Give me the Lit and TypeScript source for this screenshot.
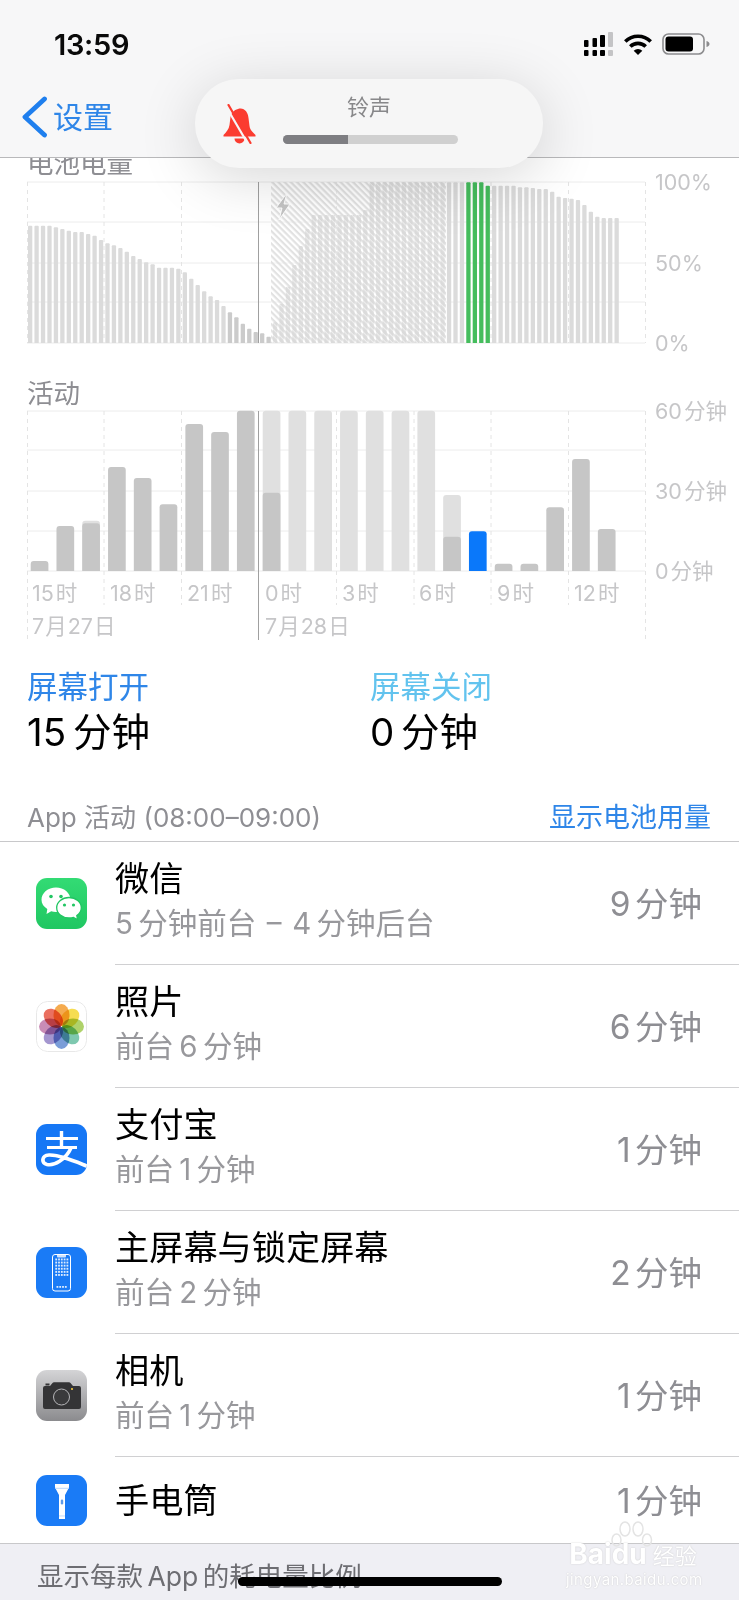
import { LitElement, html, css, svg } from "lit";
import { customElement } from "lit/decorators.js";

const batteryTops = [197,197,197,197,202,207,212,216,216,222,227,240,250,256,264,275,288,297,307,313,323,323,323,326,337,356,375,394,409,420,438,457,472,491,506,516,520,530,487,432,380,315,258,207,165,165,165,165,165,165,165,165,150,
  67,67,67,67,67,67,67,67,67,67,67,67,67,67,67,67,67,67,77,
  77,77,77,77,82,82,84,87,87,95,110,114,116,120,135,155,170,174,174,174];
const HOUR_X = [27.5, 104, 181.5, 258.5, 336.5, 414, 491, 568.5, 645.5];

const activity: { d?: number; l?: number; b?: number }[] = [
  { d: 573 }, { d: 468 }, { d: 460, l: 452 }, { d: 291 }, { d: 324 }, { d: 403 }, { d: 162 }, { d: 186 }, { d: 122 },
  { d: 368, l: 122 }, { l: 122 }, { l: 122 }, { l: 122 }, { l: 122 }, { l: 122 }, { l: 122 },
  { d: 500, l: 375 }, { b: 484 }, { d: 581 }, { d: 581 }, { d: 412 }, { d: 267 }, { d: 477 },
];

const hourLabels = [
  ["15 时", 32], ["18 时", 110], ["21 时", 187], ["0 时", 265], ["3 时", 342], ["6 时", 419], ["9 时", 497], ["12 时", 574],
] as [string, number][];

const icons: Record<string, () => unknown> = {
  wechat: () => html`<svg viewBox="0 0 51 51" width="51" height="51">
    <defs><linearGradient id="wg" x1="0" y1="0" x2="0" y2="1"><stop offset="0" stop-color="#33db74"/><stop offset="1" stop-color="#20c762"/></linearGradient></defs>
    <rect width="51" height="51" fill="url(#wg)"/>
    <path d="M20 9.500c8 0 14.500 5.500 14.500 12.300S28 34 20 34c-1.700 0-3.300-.2-4.800-.7L10.500 36l.8-5c-3.700-2.300-5.800-5.500-5.800-9.200C5.500 15 12 9.500 20 9.500Z" fill="#fff"/>
    <path d="M33 19.500c6.900 0 12.300 4.500 12.300 10.200 0 3.200-1.700 6-4.500 7.900l.8 4.300-4.100-2.500c-1.400.4-2.900.6-4.500.6-6.900 0-12.300-4.500-12.300-10.300S26.100 19.500 33 19.500Z" fill="#fff" stroke="#22c663" stroke-width="1.300"/>
    <circle cx="15" cy="18.500" r="1.800" fill="#22c663"/><circle cx="25" cy="18.500" r="1.800" fill="#22c663"/>
    <circle cx="28.500" cy="27" r="1.600" fill="#22c663"/><circle cx="37.500" cy="27" r="1.600" fill="#22c663"/>
  </svg>`,
  photos: () => {
    const colors = ["#f4a23c", "#f5d93f", "#a6cd5a", "#70c2a6", "#6c92d4", "#9a8bca", "#c380ae", "#e8604f"];
    return html`<svg viewBox="0 0 51 51" width="51" height="51">
      <rect x=".5" y=".5" width="50" height="50" rx="11" fill="#fff" stroke="#e8e8e8"/>
      ${colors.map((c, i) => svg`<ellipse cx="25.500" cy="14" rx="8" ry="11" fill=${c} fill-opacity=".9" transform="rotate(${i * 45} 25.5 25.5)" style="mix-blend-mode:multiply"/>`)}
    </svg>`;
  },
  alipay: () => html`<svg viewBox="0 0 51 51" width="51" height="51">
    <rect width="51" height="51" fill="#1677f5"/>
    <g fill="none" stroke="#fff" stroke-linecap="butt">
      <path d="M10 14.500h32M11 23.500h30" stroke-width="3.200" />
      <path d="M25.500 7v16" stroke-width="3.400"/>
      <path d="M35 24C29.500 36 18 42 11 40.500 5 39 5.500 31.500 13 31 23 30.500 38 37 52 42.500" stroke-width="3.600"/>
    </g>
  </svg>`,
  home: () => {
    const dots: unknown[] = [];
    for (let r = 0; r < 6; r++)
      for (let c = 0; c < 5; c++)
        dots.push(svg`<rect x=${19.3 + c * 2.8} y=${11.5 + r * 3.1} width="1.800" height="1.900" fill="#fff" fill-opacity=".85"/>`);
    for (let c = 0; c < 4; c++)
      dots.push(svg`<rect x=${20.5 + c * 2.8} y="39" width="1.800" height="1.800" fill="#fff" fill-opacity=".85"/>`);
    return html`<svg viewBox="0 0 51 51" width="51" height="51">
      <rect width="51" height="51" fill="#1a7bf6"/>
      <rect x="16.500" y="7.500" width="18" height="36.500" rx="2.500" fill="none" stroke="#fff" stroke-width="1"/>
      <path d="M21 8h9v1.500a1 1 0 0 1-1 1h-7a1 1 0 0 1-1-1Z" fill="#fff" fill-opacity=".8"/>
      ${dots}
    </svg>`;
  },
  camera: () => html`<svg viewBox="0 0 51 51" width="51" height="51">
    <defs><linearGradient id="cg" x1="0" y1="0" x2="0" y2="1"><stop offset="0" stop-color="#d4d4d6"/><stop offset="1" stop-color="#8b8b8e"/></linearGradient></defs>
    <rect width="51" height="51" fill="url(#cg)"/>
    <path d="M9 16h5l2.500-3a2 2 0 0 1 1.500-.7h15a2 2 0 0 1 1.500.7l2.500 3h6a2 2 0 0 1 2 2v19a2 2 0 0 1-2 2H9a2 2 0 0 1-2-2V18a2 2 0 0 1 2-2Z" fill="#343436"/>
    <rect x="9.500" y="13.500" width="4" height="2" fill="#343436"/>
    <circle cx="25.500" cy="27" r="8" fill="#3a3a3c" stroke="#b5b5b8" stroke-width="1"/>
    <circle cx="36" cy="19" r="1.100" fill="#f0c93e"/>
  </svg>`,
  flash: () => html`<svg viewBox="0 0 51 51" width="51" height="51">
    <rect width="51" height="51" fill="#1a7bf6"/>
    <path d="M19 9h14v3.500l-4 7.500v24h-6V20l-4-7.500Z" fill="#fff"/>
    <rect x="19" y="12.800" width="14" height="1" fill="#bcd8fb"/>
    <rect x="23" y="40.500" width="6" height=".9" fill="#bcd8fb"/>
    <rect x="24.800" y="24.500" width="2.400" height="5" rx="1.200" fill="#5d9ae8"/>
  </svg>`,
};

const rows = [
  { icon: "wechat", title: "微信", sub: "5 分钟前台\u00a0\u00a0–\u00a0\u00a04 分钟后台", value: "9 分钟" },
  { icon: "photos", title: "照片", sub: "前台 6 分钟", value: "6 分钟" },
  { icon: "alipay", title: "支付宝", sub: "前台 1 分钟", value: "1 分钟" },
  { icon: "home", title: "主屏幕与锁定屏幕", sub: "前台 2 分钟", value: "2 分钟" },
  { icon: "camera", title: "相机", sub: "前台 1 分钟", value: "1 分钟" },
  { icon: "flash", title: "手电筒", sub: "", value: "1 分钟" },
];

@customElement("app-root")
export class AppRoot extends LitElement {
  static styles = css`
    :host {
      display: block;
      position: relative;
      width: 739px;
      height: 1600px;
      overflow: hidden;
      background: #fff;
      font-family: "Inter", "Noto Sans CJK SC", sans-serif;
    }
    .page { display: flex; flex-direction: column; height: 1600px; }
    .header { flex: none; height: 157px; background: #f7f7f8; border-bottom: 1px solid #b9b9bb; }
    .status { height: 88px; display: flex; justify-content: space-between; align-items: center; padding: 0 29px 0 54px; }
    .time { font-size: 29px; font-weight: 600; color: #0a0a0a; letter-spacing: -0.3px; }
    .status-icons { display: flex; align-items: center; gap: 10px; }
    .status-icons svg { display: block; }
    .nav { display: flex; align-items: center; height: 58px; padding-left: 21px; gap: 5px; color: #2f86e8; font-size: 30px; }
    .nav svg { display: block; }
    .nav span { margin-top: -4px; }
    .content { flex: 1; min-height: 0; overflow: hidden; }
    .chart-title { font-size: 26.5px; line-height: 26px; color: #8e8e93; padding-left: 27px; }
    .first { margin-top: -8px; height: 26px; }
    .second { margin-top: 24px; }
    .chart { display: block; width: 739px; overflow: visible; }
    .axis { font-size: 21.5px; fill: #c6c6c8; word-spacing: -4px; }
    .axis.date { word-spacing: -5px; }
    .summary { display: grid; grid-template-columns: 343px 1fr; padding: 21px 0 0 27px; }
    .sum-label { font-size: 30.5px; line-height: 42px; }
    .on { color: #2f86e8; }
    .off { color: #62c3ee; }
    .sum-value { font-size: 38.5px; line-height: 48px; color: #000; word-spacing: -4px; }
    .app-head { display: flex; justify-content: space-between; align-items: flex-end; height: 86px; box-sizing: border-box; padding: 0 28px 5px 27px; border-bottom: 1px solid #c8c8ca; }
    .app-head span { line-height: 36px; }
    .app-title { font-size: 26px; color: #8e8e93; }
    .app-link { font-size: 27px; color: #2f86e8; }
    .row { display: flex; align-items: stretch; height: 123px; }
    .row.last { height: 86px; }
    .icon { flex: none; align-self: center; width: 51px; height: 51px; margin: 0 28px 0 36px; border-radius: 11px; overflow: hidden; }
    .icon svg { display: block; }
    .row-body { flex: 1; display: flex; align-items: center; justify-content: space-between; padding-right: 37px; border-bottom: 1px solid #d0d0d2; }
    .row.last .row-body { border-bottom: none; }
    .row-text { padding-bottom: 4px; }
    .row.last .row-text { padding-bottom: 0; padding-top: 2px; }
    .row-title { font-size: 34.2px; line-height: 44px; color: #000; }
    .row-sub { font-size: 29.5px; line-height: 44px; color: #98989c; word-spacing: -3px; }
    .row-value { font-size: 33.5px; color: #8e8e93; word-spacing: -5px; padding-bottom: 4px; }
    .footer { flex: none; height: 57px; box-sizing: border-box; background: #efeff4; border-top: 1px solid #c8c8ca; padding: 14px 0 0 37px; font-size: 26.5px; line-height: 36px; color: #6d6d72; white-space: nowrap; overflow: hidden; word-spacing: -3px; }
    .pill { position: absolute; left: 195px; top: 79px; width: 348px; height: 89px; border-radius: 44px; background: #f6f6f6; box-shadow: 0 10px 60px rgba(0, 0, 0, 0.16); display: flex; align-items: center; }
    .bell { flex: none; display: block; margin-left: 28px; }
    .pill-main { margin-left: 27px; width: 175px; display: flex; flex-direction: column; align-items: center; }
    .pill-label { font-size: 22px; line-height: 30px; color: #88888a; margin-bottom: 13px; margin-top: -12px; margin-right: 3px; }
    .track { width: 175px; height: 9px; border-radius: 4.5px; overflow: hidden; background: #d0d0d0; }
    .fill { height: 100%; background: #7e7e82; }
    .home-bar { position: absolute; left: 238px; top: 1577px; width: 264px; height: 9px; border-radius: 5px; background: #000; }
    .mark { position: absolute; left: 566px; top: 1515px; width: 134px; color: #fff; text-align: center; }
    .paw { position: absolute; left: 45px; top: 5px; display: block; }
    .mark-top { display: flex; align-items: baseline; justify-content: center; padding-top: 24px; font-size: 28px; line-height: 30px; font-weight: 700; text-shadow: 0 0 1.5px #c4c4c4; }
    .mark-top .cn { font-size: 22px; font-weight: 400; margin-left: 6px; }
    .mark-url { font-size: 15px; line-height: 18px; text-shadow: 0 0 1.5px #c4c4c4; letter-spacing: 0.4px; }
  `;

  private batteryChart() {
    const y = (t: number) => 160 + t / 3 - 176;
    const base = 167;
    const lines = [6, 46, 87, 126, 167];
    return html`<svg class="chart" height="180" viewBox="0 0 739 180">
      <defs>
        <pattern id="hatch" width="4.400" height="4.400" patternUnits="userSpaceOnUse" patternTransform="rotate(45)">
          <rect width="4.400" height="2.200" fill="#e2e2e2"/>
        </pattern>
        <pattern id="gaps" width="4.400" height="4.400" patternUnits="userSpaceOnUse" patternTransform="rotate(45)">
          <rect y="2.700" width="4.400" height="1" fill="#fff" fill-opacity=".6"/>
        </pattern>
      </defs>
      ${lines.map((l) => svg`<line x1="27" x2="645" y1=${l} y2=${l} stroke="#ececec" stroke-width="1"/>`)}
      ${HOUR_X.map((x, i) => svg`<line x1=${x} x2=${x} y1="6" y2="167" stroke=${i === 3 ? "#a0a0a0" : "#e4e4e4"} stroke-width="1" stroke-dasharray=${i === 3 ? "none" : "4 4"}/>`)}
      <rect x="271" y="6" width="175" height="161" fill="url(#hatch)"/>
      ${batteryTops.map((t, i) => {
        const top = y(t);
        const green = i >= 68 && i <= 71;
        const fill = green ? "#45bd5d" : i >= 31 && i <= 37 ? "#cbcbcb" : "#dbdbdb";
        return svg`<path d="M${28 + i * 6.445} ${base}V${top + 1}q0-1 1-1h2.300q1 0 1 1V${base}Z" fill=${fill}/>`;
      })}
      <rect x="271" y="6" width="175" height="161" fill="url(#gaps)"/>
      <path d="M287 17l-11 15h6l-3 12 11-16h-6l3-11Z" fill="#c4c4c4" stroke="#fff" stroke-width="1"/>
      <text class="axis" x="655" y="14">100%</text>
      <text class="axis" x="655" y="95">50%</text>
      <text class="axis" x="655" y="175">0%</text>
    </svg>`;
  }

  private activityChart() {
    const y = (t: number) => 370 + t / 3 - 406;
    const base = 165;
    const lines = [5, 44, 85, 125, 165];
    const bar = (i: number, t: number, fill: string) => {
      const x = 30.7 + i * 25.78;
      const top = y(t);
      return svg`<path d="M${x} ${base}V${top + 3}q0-3 3-3h11.700q3 0 3 3V${base}Z" fill=${fill}/>`;
    };
    return html`<svg class="chart" height="239" viewBox="0 0 739 239">
      ${lines.map((l) => svg`<line x1="27" x2="645" y1=${l} y2=${l} stroke="#ececec" stroke-width="1"/>`)}
      ${HOUR_X.map((x, i) => {
        const long = i === 0 || i === 3 || i === 8;
        return svg`<line x1=${x} x2=${x} y1="5" y2=${long ? 234 : 199} stroke=${i === 3 ? "#a0a0a0" : "#e4e4e4"} stroke-width="1" stroke-dasharray=${i === 3 ? "none" : "4 4"}/>`;
      })}
      ${activity.map((a, i) => svg`
        ${a.l ? bar(i, a.l, "#e0e0e0") : ""}
        ${a.d ? bar(i, a.d, "#c6c6c6") : ""}
        ${a.b ? bar(i, a.b, "#0a78fa") : ""}`)}
      ${hourLabels.map(([t, x]) => svg`<text class="axis" x=${x} y="195">${t}</text>`)}
      <text class="axis date" x="32" y="228">7 月 27 日</text>
      <text class="axis date" x="265" y="228">7 月 28 日</text>
      <text class="axis" x="655" y="13">60 分钟</text>
      <text class="axis" x="655" y="93">30 分钟</text>
      <text class="axis" x="655" y="173">0 分钟</text>
    </svg>`;
  }

  render() {
    return html`
      <div class="page">
        <header class="header">
          <div class="status">
            <span class="time">13:59</span>
            <div class="status-icons">
              <svg width="30" height="24" viewBox="0 0 30 24">
                <g fill="#000">
                  <rect x="0" y="8" width="4.500" height="7" rx="1"/><rect x="8.500" y="6" width="4.500" height="9" rx="1"/><rect x="16" y="3" width="5" height="12" rx="1"/>
                  <rect x="0" y="18" width="4.500" height="6" rx="1"/><rect x="8.500" y="18" width="4.500" height="6" rx="1"/><rect x="16" y="18" width="5" height="6" rx="1"/>
                </g>
                <rect x="24" y="0" width="5" height="15" rx="1" fill="#c4c4c6"/><rect x="24" y="18" width="5" height="6" rx="1" fill="#c4c4c6"/>
              </svg>
              <svg width="28" height="21" viewBox="0 0 28 21">
                <g fill="none" stroke="#000" stroke-width="3.600">
                  <path d="M1.300 7.500A18 18 0 0 1 26.700 7.500"/>
                  <path d="M6.300 12.500A11 11 0 0 1 21.700 12.500"/>
                </g>
                <path d="M14 21 9.700 16.700A6.200 6.200 0 0 1 18.300 16.700Z" fill="#000"/>
              </svg>
              <svg width="48" height="22" viewBox="0 0 48 22">
                <rect x="1" y="1" width="41" height="20" rx="5.500" fill="none" stroke="#8c8c8e" stroke-width="1.600"/>
                <rect x="3.500" y="3.500" width="27.500" height="15" rx="3" fill="#000"/>
                <path d="M44.500 8c2 .6 3 1.700 3 3s-1 2.400-3 3Z" fill="#8c8c8e"/>
              </svg>
            </div>
          </div>
          <nav class="nav">
            <svg width="27" height="42" viewBox="0 0 27 42"><path d="M23.500 3 4 21l19.500 18" fill="none" stroke="#1f7fee" stroke-width="4.800" stroke-linecap="round" stroke-linejoin="round"/></svg>
            <span>设置</span>
          </nav>
        </header>

        <main class="content">
          <div class="chart-title first">电池电量</div>
          ${this.batteryChart()}
          <div class="chart-title second">活动</div>
          ${this.activityChart()}
          <section class="summary">
            <div><div class="sum-label on">屏幕打开</div><div class="sum-value">15 分钟</div></div>
            <div><div class="sum-label off">屏幕关闭</div><div class="sum-value">0 分钟</div></div>
          </section>
          <div class="app-head"><span class="app-title">App 活动 (08:00–09:00)</span><span class="app-link">显示电池用量</span></div>
          ${rows.map((r, i) => html`
            <div class="row ${i === rows.length - 1 ? "last" : ""}">
              <div class="icon">${icons[r.icon]()}</div>
              <div class="row-body">
                <div class="row-text">
                  <div class="row-title">${r.title}</div>
                  ${r.sub ? html`<div class="row-sub">${r.sub}</div>` : ""}
                </div>
                <div class="row-value">${r.value}</div>
              </div>
            </div>`)}
        </main>

        <footer class="footer">显示每款 App 的耗电量比例</footer>
      </div>

      <div class="pill">
        <svg class="bell" width="33" height="40" viewBox="0 0 33 40">
          <path d="M15 5C21 3 25 8 25.500 14L26.500 22C27 26 30 28.500 32.500 31V32.500H.5V31C3 28.500 6 25 6.500 21L7.500 13C8 9 11 6 15 5Z" fill="#fb3c30"/>
          <path d="M11.500 34.500H21.500A5 5 0 0 1 11.500 34.500Z" fill="#fb3c30"/>
          <path d="M3.300 3 25 40" stroke="#f6f6f6" stroke-width="2.200"/>
          <path d="M5.500 1 27.500 39" stroke="#fb3c30" stroke-width="2.200" stroke-linecap="round"/>
        </svg>
        <div class="pill-main">
          <div class="pill-label">铃声</div>
          <div class="track"><div class="fill" style="width:${(65 / 175) * 100}%"></div></div>
        </div>
      </div>

      <div class="mark">
        <svg class="paw" width="42" height="34" viewBox="0 0 42 34" fill="none" stroke="#e4e4e4" stroke-width="1.500">
          <ellipse cx="14" cy="9" rx="5" ry="7"/><ellipse cx="27" cy="9" rx="5" ry="7"/>
          <ellipse cx="5.500" cy="20" rx="4.500" ry="6"/><ellipse cx="36" cy="20" rx="4.500" ry="6"/>
        </svg>
        <div class="mark-top"><span>Bai</span><span>du</span><span class="cn">经验</span></div>
        <div class="mark-url">jingyan.baidu.com</div>
      </div>

      <div class="home-bar"></div>
    `;
  }
}
